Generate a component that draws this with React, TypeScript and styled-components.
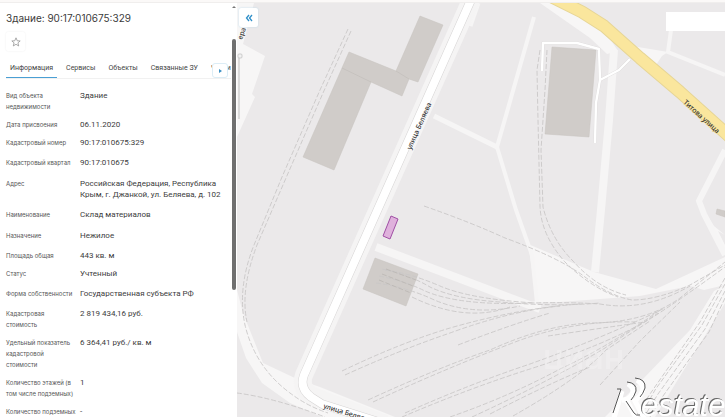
import React from "react";
import styled, { createGlobalStyle } from "styled-components";

const Global = createGlobalStyle`
  * { box-sizing: border-box; }
  body { margin: 0; background: #fff; font-family: Inter, "Liberation Sans", sans-serif; color: #3c3c3c; }
`;

const Page = styled.div`
  display: flex;
  flex-direction: column;
  height: 100vh;
  overflow: hidden;
`;

const TopStrip = styled.div`
  flex: none;
  height: 3px;
  background: #fbf9f8;
  border-bottom: 1px solid #f0eeed;
`;

const Body = styled.div`
  flex: 1;
  min-height: 0;
  display: flex;
`;

const Panel = styled.aside`
  flex: none;
  width: 237px;
  display: flex;
  overflow: hidden;
  background: #fff;
`;

const PanelContent = styled.div`
  flex: 1;
  min-width: 0;
  padding: 8px 0 0 6px;
`;

const Title = styled.h1`
  margin: 0;
  font-size: 10px;
  line-height: 14px;
  font-weight: 400;
`;

const StarButton = styled.button`
  display: grid;
  place-items: center;
  width: 19px;
  height: 19px;
  margin-top: 7px;
  padding: 0;
  border: 0;
  border-radius: 2px;
  background: #fff;
  box-shadow: 0 0 2px #ececec;
`;

const TabBar = styled.nav`
  position: relative;
  margin-top: 12px;
`;

const TabList = styled.div`
  display: flex;
  overflow: hidden;
  border-bottom: 1px solid #f1f1f1;
`;

const Tab = styled.button<{ $active?: boolean }>`
  flex: none;
  height: 15px;
  padding: 0 4px 3px;
  margin-right: 5px;
  border: 0;
  border-bottom: 1px solid ${(p) => (p.$active ? "#4a9fd4" : "transparent")};
  background: none;
  color: #444;
  font-family: Roboto, sans-serif;
  font-size: 7px;
  line-height: 11px;
`;

const NextTabs = styled.button`
  position: absolute;
  top: 0;
  right: 3px;
  display: grid;
  place-items: center;
  width: 16px;
  height: 15px;
  padding: 0;
  border: 1px solid #dcedf6;
  border-radius: 3px;
  background: #fff;
`;

const Details = styled.dl`
  margin: 11px 0 0;
`;

const gaps = { s: 7, m: 9, l: 10 };

const DetailRow = styled.div<{ $gap: keyof typeof gaps }>`
  display: grid;
  grid-template-columns: 74px 1fr;
  margin-bottom: ${(p) => gaps[p.$gap]}px;
`;

const Label = styled.dt`
  font-size: 6px;
  line-height: 11px;
  color: #555;
  white-space: pre-line;
`;

const Value = styled.dd`
  margin: 0;
  font-family: Roboto, sans-serif;
  font-size: 8px;
  line-height: 11px;
  white-space: pre-line;
`;

const ScrollTrack = styled.div`
  flex: none;
  display: flex;
  flex-direction: column;
  align-items: center;
  gap: 31px;
  width: 6px;
  padding-top: 3px;
`;

const ScrollArrow = styled.div`
  flex: none;
  border: 2px solid transparent;
  border-top: 0;
  border-bottom-color: #777;
`;

const ScrollThumb = styled.div`
  width: 4px;
  height: 61%;
  border-radius: 2px;
  background: #6f6f6f;
`;

const MapArea = styled.main`
  position: relative;
  flex: 1;
  min-width: 0;
  background: #ebe9ea;
`;

const MapSvg = styled.svg`
  position: absolute;
  inset: 0;
  width: 100%;
  height: 100%;
`;

const CollapseButton = styled.button`
  position: absolute;
  top: 5px;
  left: 2px;
  display: grid;
  place-items: center;
  width: 19px;
  height: 19px;
  padding: 0;
  border: 0;
  border-radius: 2px;
  background: #fff;
  box-shadow: 0 0 2px #b9d8ea;
`;

const SearchBox = styled.input`
  position: absolute;
  top: 9px;
  right: 0;
  width: 59px;
  height: 19px;
  padding: 0 4px;
  border: 0;
  background: #fff;
  font: inherit;
  font-size: 8px;
`;

type Row = { label: string; value: string; gap: keyof typeof gaps };

const rows: Row[] = [
  { label: "Вид объекта\nнедвижимости", value: "Здание", gap: "s" },
  { label: "Дата присвоения", value: "06.11.2020", gap: "s" },
  { label: "Кадастровый номер", value: "90:17:010675:329", gap: "m" },
  { label: "Кадастровый квартал", value: "90:17:010675", gap: "l" },
  { label: "Адрес", value: "Российская Федерация, Республика\nКрым, г. Джанкой, ул. Беляева, д. 102", gap: "m" },
  { label: "Наименование", value: "Склад материалов", gap: "l" },
  { label: "Назначение", value: "Нежилое", gap: "m" },
  { label: "Площадь общая", value: "443 кв. м", gap: "s" },
  { label: "Статус", value: "Учтенный", gap: "m" },
  { label: "Форма собственности", value: "Государственная субъекта РФ", gap: "m" },
  { label: "Кадастровая\nстоимость", value: "2 819 434,16 руб.", gap: "s" },
  { label: "Удельный показатель\nкадастровой\nстоимости", value: "6 364,41 руб./ кв. м", gap: "s" },
  { label: "Количество этажей (в\nтом числе подземных)", value: "1", gap: "s" },
  { label: "Количество подземных", value: "-", gap: "s" },
];

const clearings = [
  "M237 3H254L243 44L265 56L252 94L255 97L237 137Z",
  "M237 290L243 313L263 363L297 379L320 387L395 417H322L290 403L262 383L246 358L237 332Z",
  "M540 3L552 3L603 28L618 51L607 54L590 38Z",
  "M632 46L668 52L662 56L656 65L648 58Z",
  "M528 244L594 272L656 289L725 257V285L704 290L690 286L640 296L560 302L524 303L537 301Z",
  "M725 285L714 291L690 330L642 380L605 417H655L690 360L725 303Z",
  "M699 207L712 229L725 254V245L718 231L725 235L714 226L702 207Z",
];

const paths = [
  { d: "M478 3L470 26", w: 5 },
  { d: "M534 17L497 147L516 210L532 255L537 303", w: 4 },
  { d: "M434 116L497 147", w: 5 },
  { d: "M614 50L609 120L601 210L595 272", w: 8 },
  { d: "M671 30L668 52L725 75", w: 4 },
  { d: "M725 150L699 201L704 214L725 255", w: 6 },
  { d: "M376 247L540 309", w: 8 },
];

const rails = [
  "M348 29L320 90L282 177L254 245Q237 288 245 325Q255 367 290 393Q307 406 328 413",
  "M351 31L323 93L286 178L257 245Q240 290 247 322",
  "M237 393Q275 398 325 417",
  "M424 206Q470 222 505 238Q560 258 585 277Q610 296 632 300Q657 300 690 285L725 265",
  "M540 50L537 70L538 120L540 206Q541 235 565 262Q590 287 618 297",
  "M547 50L545 90L541 150L543 207Q551 239 573 261Q597 288 626 295",
  "M382 269Q410 275 430 287Q455 299 500 302Q555 307 600 303",
  "M379 276Q405 281 425 291Q460 306 530 303Q570 302 600 304Q645 312 690 286",
  "M376 283Q405 287 430 298Q470 317 520 306",
  "M385 270Q410 273 440 286Q470 299 535 303",
  "M412 297Q465 323 510 307",
  "M342 371Q400 343 450 328Q520 308 580 304",
  "M345 375Q400 350 450 333Q510 311 560 306",
  "M368 400Q440 367 490 350Q545 325 590 323Q645 323 680 298L725 262",
  "M373 402Q440 371 510 344Q570 320 635 322",
  "M402 417Q470 388 530 369Q605 345 650 319Q680 300 725 267",
  "M405 413Q470 384 530 364Q605 337 665 308",
  "M458 345Q510 325 550 313",
  "M450 417Q510 396 560 369Q608 347 660 310",
  "M472 417Q550 381 605 348L658 313",
  "M490 414Q550 383 590 367",
  "M513 416Q580 378 606 350L650 321",
  "M548 336Q595 329 645 322",
  "M600 385L640 341L680 302",
  "M725 278L700 322L650 394L635 417",
  "M725 284L702 325L655 390L640 417",
  "M725 291L705 329L658 394L644 417",
  "M725 298L709 332L663 396L650 417",
];

const buildings = [
  "M420 16L443 25L418 82L409 79L402 96L371 82L334 170L303 157L349 52L396 71Z",
  "M552 47L596 50L589 137L545 134Z",
  "M375 258L418 274L406 306L363 289Z",
  "M717 209L725 211V217L716 214Z",
];

const LogoText = styled.text`
  font-family: "Liberation Sans", sans-serif;
  font-style: italic;
  font-size: 31px;
  fill: #fff;
  filter: drop-shadow(-1px -1px 0 #666);
`;

function MapDrawing() {
  return (
    <MapSvg viewBox="237 3 488 414" preserveAspectRatio="xMinYMin slice" role="img" aria-label="Карта">
      {clearings.map((d) => <path key={d} d={d} fill="#f7f6f6" />)}
      {paths.map((p) => <path key={p.d} d={p.d} fill="none" stroke="#f6f5f5" strokeWidth={p.w} />)}
      <path d="M471 0L304 375Q299 390 315 397L385 424" fill="none" stroke="#f5f4f4" strokeWidth="18" />
      <g fill="#d0ccc9" stroke="#c6c2bf" strokeWidth=".5">
        {buildings.map((d) => <path key={d} d={d} />)}
        <path d="M342 68L371 82M396 71L409 79" fill="none" stroke="#bcb8b4" />
      </g>
      <g fill="none" stroke="#c9c7c7" strokeWidth=".9" strokeDasharray="5 2">
        {rails.map((d) => <path key={d} d={d} />)}
      </g>
      <path d="M386 269L416 280M382 274L413 286M379 280L411 293" fill="none" stroke="#bab6b3" strokeWidth=".8" strokeDasharray="5 2" />
      <g fill="none" strokeLinejoin="round">
        <path d="M471 0L304 375Q299 388 311 397L322 404L385 424" stroke="#d6d4d4" strokeWidth="9" />
        <path d="M471 0L304 375Q299 388 311 397L322 404L385 424" stroke="#fff" strokeWidth="8" />
        <path d="M542 71L543 43L577 43L599 49L600 80L596 103L595 143M600 80L619 70L630 59" stroke="#dad8d8" strokeWidth="3" />
        <path d="M542 71L543 43L577 43L599 49L600 80L596 103L595 143M600 80L619 70L630 59" stroke="#fff" strokeWidth="2.400" />
        <path d="M552 -3L582 12L604 26L640 58L680 92L730 137" stroke="#e6d596" strokeWidth="13" />
        <path d="M552 -3L582 12L604 26L640 58L680 92L730 137" stroke="#fae69d" strokeWidth="11" />
      </g>
      <path d="M391 216L398 219L390 239L383 236Z" fill="#dfb1dc" stroke="#a04fa5" />
      <g fill="#333" stroke="#fff" strokeWidth="1" paintOrder="stroke" fontFamily="Noto Sans, sans-serif" fontWeight="500" fontSize="7">
        <text transform="translate(411 150) rotate(-66)">улица Беляева</text>
        <text transform="translate(323 408) rotate(17)">улица Беляева</text>
        <text transform="translate(683 103) rotate(42)" stroke="#fae69d">Титова улица</text>
        <text transform="translate(242 40) rotate(-70)">ера</text>
      </g>
      <path d="M239 56V119" stroke="#bdbdbd" strokeWidth="1" />
      <rect x="238" y="54" width="4" height="4" rx="1" fill="#f2f2f2" stroke="#bbb" strokeWidth=".7" />
      <text x="543" y="369" fill="#fff" opacity=".22" fontFamily="Inter, sans-serif" fontWeight="500" fontSize="34">циан</text>
      <g fill="none" stroke="#fff">
        <path d="M622 391L614 418M628 384Q636 389 631 396Q628 400 622 400M627 401L636 418" strokeWidth="5" />
        <path d="M637 380Q647 386 640 396L635 401L644 418" strokeWidth="5" />
      </g>
      <g fill="none" stroke="#555" strokeWidth="1">
        <path d="M617 389H621L613 413" />
        <path d="M627 382Q637 383 636 391Q634 397 631 400" />
        <path d="M635 378Q646 379 645 388Q643 394 640 397" />
        <path d="M626 401L634 413Q636 416 640 415" />
      </g>
      <LogoText x="641" y="416">estate</LogoText>
    </MapSvg>
  );
}

export default function App() {
  return (
    <>
      <Global />
      <Page>
        <TopStrip />
        <Body>
          <Panel>
            <PanelContent>
              <Title>Здание: 90:17:010675:329</Title>
              <StarButton aria-label="В избранное">
                <svg width="10" height="10" viewBox="0 0 24 24" fill="none" stroke="#999" strokeWidth="2">
                  <path d="M12 2L15 9L22 9.500L16.600 14L18.500 21.500L12 17.500L5.500 21.500L7.400 14L2 9.500L9 9Z" />
                </svg>
              </StarButton>
              <TabBar>
                <TabList>
                  <Tab $active>Информация</Tab>
                  <Tab>Сервисы</Tab>
                  <Tab>Объекты</Tab>
                  <Tab>Связанные ЗУ</Tab>
                  <Tab>Части</Tab>
                </TabList>
                <NextTabs aria-label="Следующие вкладки">
                  <svg width="3" height="4" viewBox="0 0 3 4"><path d="M0 0L3 2L0 4Z" fill="#3a8fc4" /></svg>
                </NextTabs>
              </TabBar>
              <Details>
                {rows.map((r) => (
                  <DetailRow key={r.label} $gap={r.gap}>
                    <Label>{r.label}</Label>
                    <Value>{r.value}</Value>
                  </DetailRow>
                ))}
              </Details>
            </PanelContent>
            <ScrollTrack>
              <ScrollArrow />
              <ScrollThumb />
            </ScrollTrack>
          </Panel>
          <MapArea>
            <MapDrawing />
            <CollapseButton aria-label="Свернуть панель">
              <svg width="8" height="8" viewBox="0 0 8 8" fill="none" stroke="#2f8fc9" strokeWidth="1.300">
                <path d="M4 1L1.500 4L4 7M7 1L4.500 4L7 7" />
              </svg>
            </CollapseButton>
            <SearchBox aria-label="Поиск" />
          </MapArea>
        </Body>
      </Page>
    </>
  );
}
